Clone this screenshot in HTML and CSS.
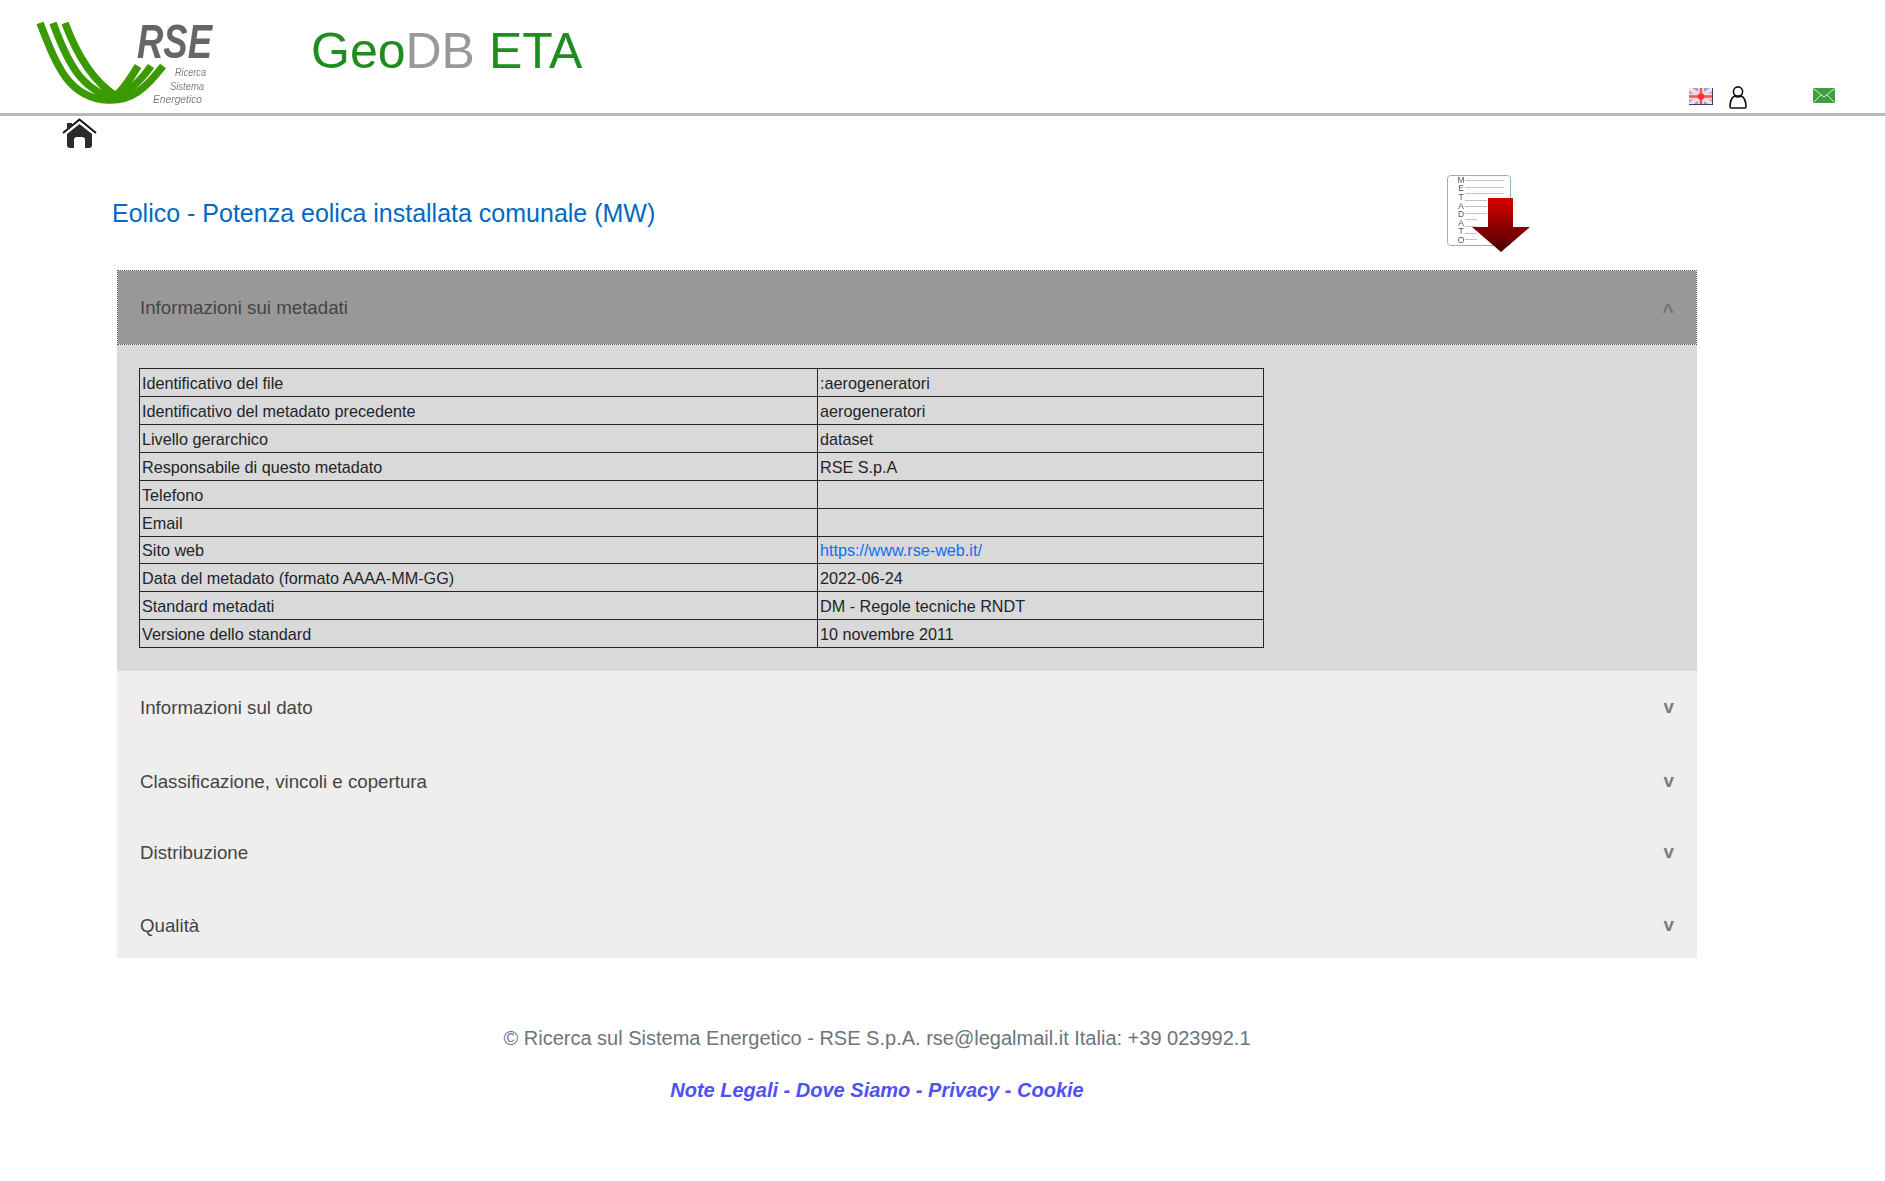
FILE: index.html
```html
<!DOCTYPE html>
<html lang="it">
<head>
<meta charset="utf-8">
<title>GeoDB ETA</title>
<link rel="stylesheet" href="styles.css">
</head>
<body>
<header class="topbar">
  <svg class="logo" viewBox="0 0 200 84" width="200" height="84" aria-label="RSE">
    <g fill="none" stroke="#3a9a00" stroke-width="7.500">
      <path d="M4 1 C20 42 32 76 72 78 C96 79 110 66 127 44"/>
      <path d="M17 1 C32 42 46 68 78 76 C92 70 104 60 115 44"/>
      <path d="M29 1 C42 36 58 60 80 74 C88 66 95 56 102 44"/>
    </g>
    <text class="logo-rse" x="101" y="36" textLength="75" lengthAdjust="spacingAndGlyphs">RSE</text>
    <text class="logo-sub" x="139" y="54" textLength="31" lengthAdjust="spacingAndGlyphs">Ricerca</text>
    <text class="logo-sub" x="134" y="68" textLength="34" lengthAdjust="spacingAndGlyphs">Sistema</text>
    <text class="logo-sub" x="117" y="81" textLength="49" lengthAdjust="spacingAndGlyphs">Energetico</text>
  </svg>
  <h1 class="brand"><span class="brand-green">Geo</span><span class="brand-gray">DB</span><span class="brand-green"> ETA</span></h1>
  <div class="top-icons">
    <svg class="flag" viewBox="0 0 24 17" width="24" height="17">
      <rect width="24" height="17" fill="#96a0dc"/>
      <path d="M0 0L24 17M24 0L0 17" stroke="#f6dbe4" stroke-width="4"/>
      <path d="M12 0V17M0 8.500H24" stroke="#fad6da" stroke-width="6"/>
      <path d="M12 0V17M0 8.500H24" stroke="#f0505a" stroke-width="2.400"/>
      <circle cx="12" cy="8.500" r="3.200" fill="#f8303a"/>
      <path d="M0 16.500H24M23.500 0V17" stroke="#3a3a66"/>
    </svg>
    <svg class="user" viewBox="0 0 18 23" width="18" height="23">
      <circle cx="9" cy="5.500" r="4.600" fill="none" stroke="#111" stroke-width="1.600"/>
      <path d="M5.500 10 C2 12 1 15 1 21 Q1 22 2 22 H16 Q17 22 17 21 C17 15 16 12 12.500 10 Q9 12 5.500 10 Z" fill="none" stroke="#111" stroke-width="1.600"/>
    </svg>
    <svg class="mail" viewBox="0 0 22 15" width="22" height="15">
      <rect width="22" height="15" rx="1.500" fill="#3f9f3f"/>
      <path d="M1 1L11 9L21 1M1 14L8 7M21 14L14 7" fill="none" stroke="#d8eed8" stroke-width="1"/>
    </svg>
  </div>
</header>
<nav class="homebar">
  <svg viewBox="0 0 35 30" width="35" height="30" aria-label="Home">
    <path d="M1 15 L17.500 1.500 L34 15" fill="none" stroke="#111" stroke-width="2"/>
    <path d="M5 5H10V8L5 12Z" fill="#2b2b2b"/>
    <path d="M17.500 6 L30 16 V27 Q30 30 27 30 H23 V22 Q23 19 20 19 H15 Q12 19 12 22 V30 H8 Q5 30 5 27 V16 Z" fill="#2b2b2b"/>
  </svg>
</nav>
<main>
  <div class="title-row">
    <h2 class="title">Eolico - Potenza eolica installata comunale (MW)</h2>
    <svg class="meta-icon" viewBox="0 0 84 78" width="84" height="78">
      <defs>
        <linearGradient id="redarrow" x1="0" y1="0" x2="0" y2="1">
          <stop offset="0" stop-color="#d80000"/>
          <stop offset="1" stop-color="#4a0000"/>
        </linearGradient>
      </defs>
      <rect x="0.500" y="0.500" width="63" height="70" rx="3" fill="#fff" stroke="#8cc09a"/>
      <g stroke="#c4c4c4">
        <path d="M18 5.500H57M18 12.500H57M18 18.500H57M18 25.500H40M18 31.500H40M18 38.500H40M18 44.500H30M18 51.500H30M18 58.500H30M18 64.500H30"/>
      </g>
      <g class="meta-letters">
        <text x="14" y="8">M</text><text x="14" y="16">E</text><text x="14" y="25">T</text><text x="14" y="34">A</text><text x="14" y="42">D</text><text x="14" y="51">A</text><text x="14" y="59">T</text><text x="14" y="68">O</text>
      </g>
      <path d="M41 23 H66 V52 H83 L54 77 L25 52 H41 Z" fill="url(#redarrow)"/>
    </svg>
  </div>

  <section class="accordion">
    <div class="acc-head acc-open"><span>Informazioni sui metadati</span><span class="chev chev-up">^</span></div>
    <div class="acc-panel">
      <table class="meta-table">
        <colgroup><col class="col-a"><col class="col-b"></colgroup>
        <tr><td>Identificativo del file</td><td>:aerogeneratori</td></tr>
        <tr><td>Identificativo del metadato precedente</td><td>aerogeneratori</td></tr>
        <tr><td>Livello gerarchico</td><td>dataset</td></tr>
        <tr><td>Responsabile di questo metadato</td><td>RSE S.p.A</td></tr>
        <tr><td>Telefono</td><td></td></tr>
        <tr><td>Email</td><td></td></tr>
        <tr class="row-short"><td>Sito web</td><td><a href="#">https://www.rse-web.it/</a></td></tr>
        <tr><td>Data del metadato (formato AAAA-MM-GG)</td><td>2022-06-24</td></tr>
        <tr><td>Standard metadati</td><td>DM - Regole tecniche RNDT</td></tr>
        <tr><td>Versione dello standard</td><td>10 novembre 2011</td></tr>
      </table>
    </div>
    <div class="acc-head acc-dato"><span>Informazioni sul dato</span><span class="chev">v</span></div>
    <div class="acc-head acc-class"><span>Classificazione, vincoli e copertura</span><span class="chev">v</span></div>
    <div class="acc-head acc-dist"><span>Distribuzione</span><span class="chev">v</span></div>
    <div class="acc-head acc-qual"><span>Qualità</span><span class="chev">v</span></div>
  </section>

  <footer class="footer">
    <p class="copy">© Ricerca sul Sistema Energetico - RSE S.p.A. rse@legalmail.it Italia: +39 023992.1</p>
    <p class="links"><a href="#">Note Legali</a> - <a href="#">Dove Siamo</a> - <a href="#">Privacy</a> - <a href="#">Cookie</a></p>
  </footer>
</main>
</body>
</html>
```
FILE: styles.css
```css
* { box-sizing: border-box; }
html, body { margin: 0; padding: 0; background: #fff; }
body { font-family: "Liberation Sans", Arial, sans-serif; color: #212529; height: 1181px; overflow: hidden; }
.topbar { height: 116px; border-bottom: 3px solid #b8b8b8; display: flex; align-items: flex-start; position: relative; padding: 22px 0 0 36px; }
.logo { flex: none; display: block; filter: blur(0.3px); }
.logo-rse { font: italic bold 48px "Liberation Sans", sans-serif; fill: #666; }
.logo-sub { font: italic 10px "Liberation Sans", sans-serif; fill: #808080; }
.brand { margin: 0 0 0 75px; font-size: 50px; font-weight: 400; line-height: 58px; }
.brand-green { color: #1f8c1f; }
.brand-gray { color: #999; }
.top-icons { position: absolute; left: 1689px; top: 86px; display: flex; align-items: flex-start; }
.flag { margin-top: 2px; filter: blur(0.5px); }
.user { margin-left: 16px; }
.mail { margin-left: 66px; margin-top: 2px; }
.homebar { height: 44px; padding: 2px 0 0 62px; }
.homebar svg { display: block; }
main { display: block; }
.title-row { height: 110px; display: flex; padding: 15px 0 0 112px; }
.title { margin: 23px 0 0; font-size: 25px; font-weight: 400; line-height: 30px; color: #0069c0; width: 1335px; flex: none; }
.meta-icon { flex: none; filter: blur(0.3px); }
.meta-letters text { font: 8.500px "Liberation Sans", sans-serif; fill: #555; text-anchor: middle; }
.accordion { margin-left: 117px; width: 1580px; background: #eee; }
.acc-head { padding: 23px 23px 0; display: flex; justify-content: space-between; align-items: flex-start; font-size: 18.720px; line-height: 28px; color: #444; background: #eee; }
.acc-dato { height: 74px; }
.acc-class { height: 71px; }
.acc-dist { height: 73px; }
.acc-qual { height: 69px; }
.acc-open { height: 75px; padding: 23px 22px 0; background: #989898; background-clip: padding-box; border: 1px dotted #555; }
.chev { font-weight: 700; color: #757c85; margin-top: -1px; }
.chev-up { color: #70757a; font-size: 20px; margin-top: 3px; }
.acc-panel { background: #d9d9d9; padding: 23px 22px; }
.meta-table { border-collapse: collapse; table-layout: fixed; width: 1124px; font-size: 16.200px; color: #212529; }
.col-a { width: 678px; }
.col-b { width: 446px; }
.meta-table td { border: 1px solid #212529; height: 28px; padding: 0 2px; line-height: 18px; }
.meta-table .row-short td { height: 27px; }
.meta-table a { color: #0d6efd; text-decoration: none; }
.footer { width: 1754px; text-align: center; padding-top: 68px; }
.copy { margin: 0; font-size: 20px; line-height: 24px; color: #6c757d; }
.links { margin: 28px 0 0; font-size: 20px; line-height: 24px; font-weight: 700; font-style: italic; color: #4d52f2; }
.links a { color: #4d52f2; text-decoration: none; }
```
